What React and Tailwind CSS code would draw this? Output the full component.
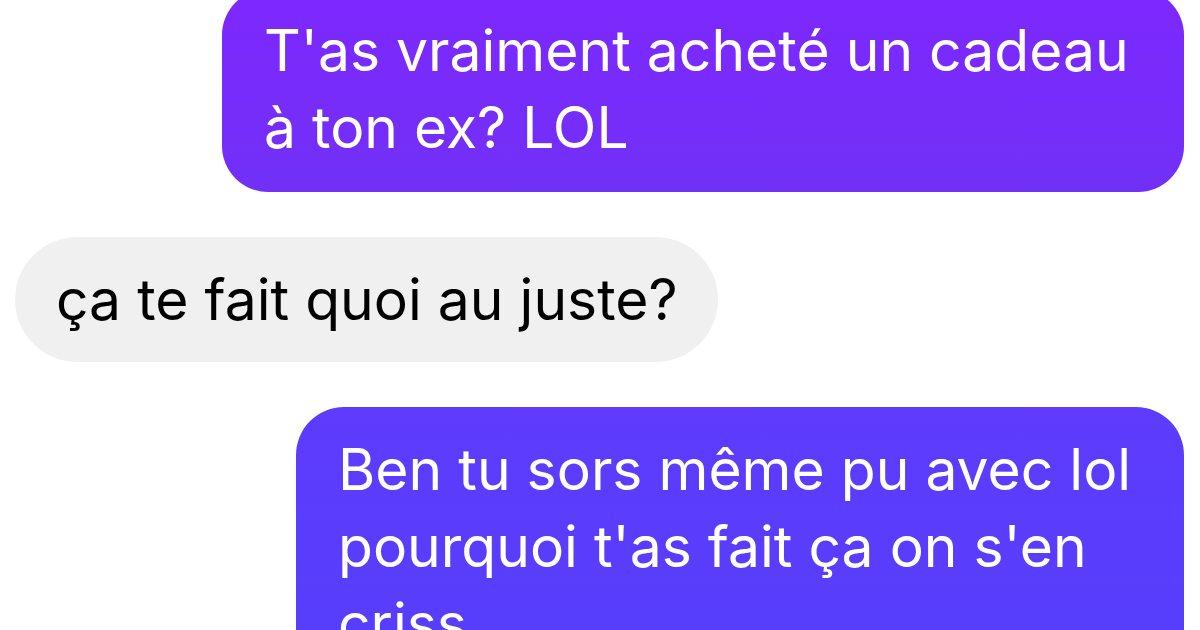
const Bubble = ({ side, className, children }) => (
  <div
    className={`${side === 'me' ? 'ml-auto text-white' : 'text-black bg-[#f0f0f0]'} ${className}`}
  >
    {children}
  </div>
);

export default function App() {
  return (
    <div
      className="w-[1200px] h-[630px] overflow-hidden bg-white"
      style={{ fontFamily: 'Inter, "Liberation Sans", sans-serif' }}
    >
      <div className="flex flex-col gap-[45px] pl-[15px] pr-[16px] -mt-[11px] text-[57px] leading-[77px]">
        {/* sent */}
        <Bubble side="me" className="w-[962px] rounded-[46px] pl-[42px] pt-[23px] pb-[26px] bg-gradient-to-b from-[#7d27ff] to-[#7130f6]">
          T'as vraiment acheté un cadeau
          <br />
          à ton ex? LOL
        </Bubble>

        {/* received */}
        <Bubble side="them" className="w-[703px] rounded-full pl-[41px] pt-[24px] pb-[24px]">
          ça te fait quoi au juste?
        </Bubble>

        {/* sent */}
        <Bubble side="me" className="w-[888px] rounded-[48px] pl-[42px] pt-[24px] pb-[26px] bg-gradient-to-b from-[#5e3bfd] to-[#553ffb]">
          Ben tu sors même pu avec lol
          <br />
          pourquoi t'as fait ça on s'en
          <br />
          criss.
        </Bubble>
      </div>
    </div>
  );
}
